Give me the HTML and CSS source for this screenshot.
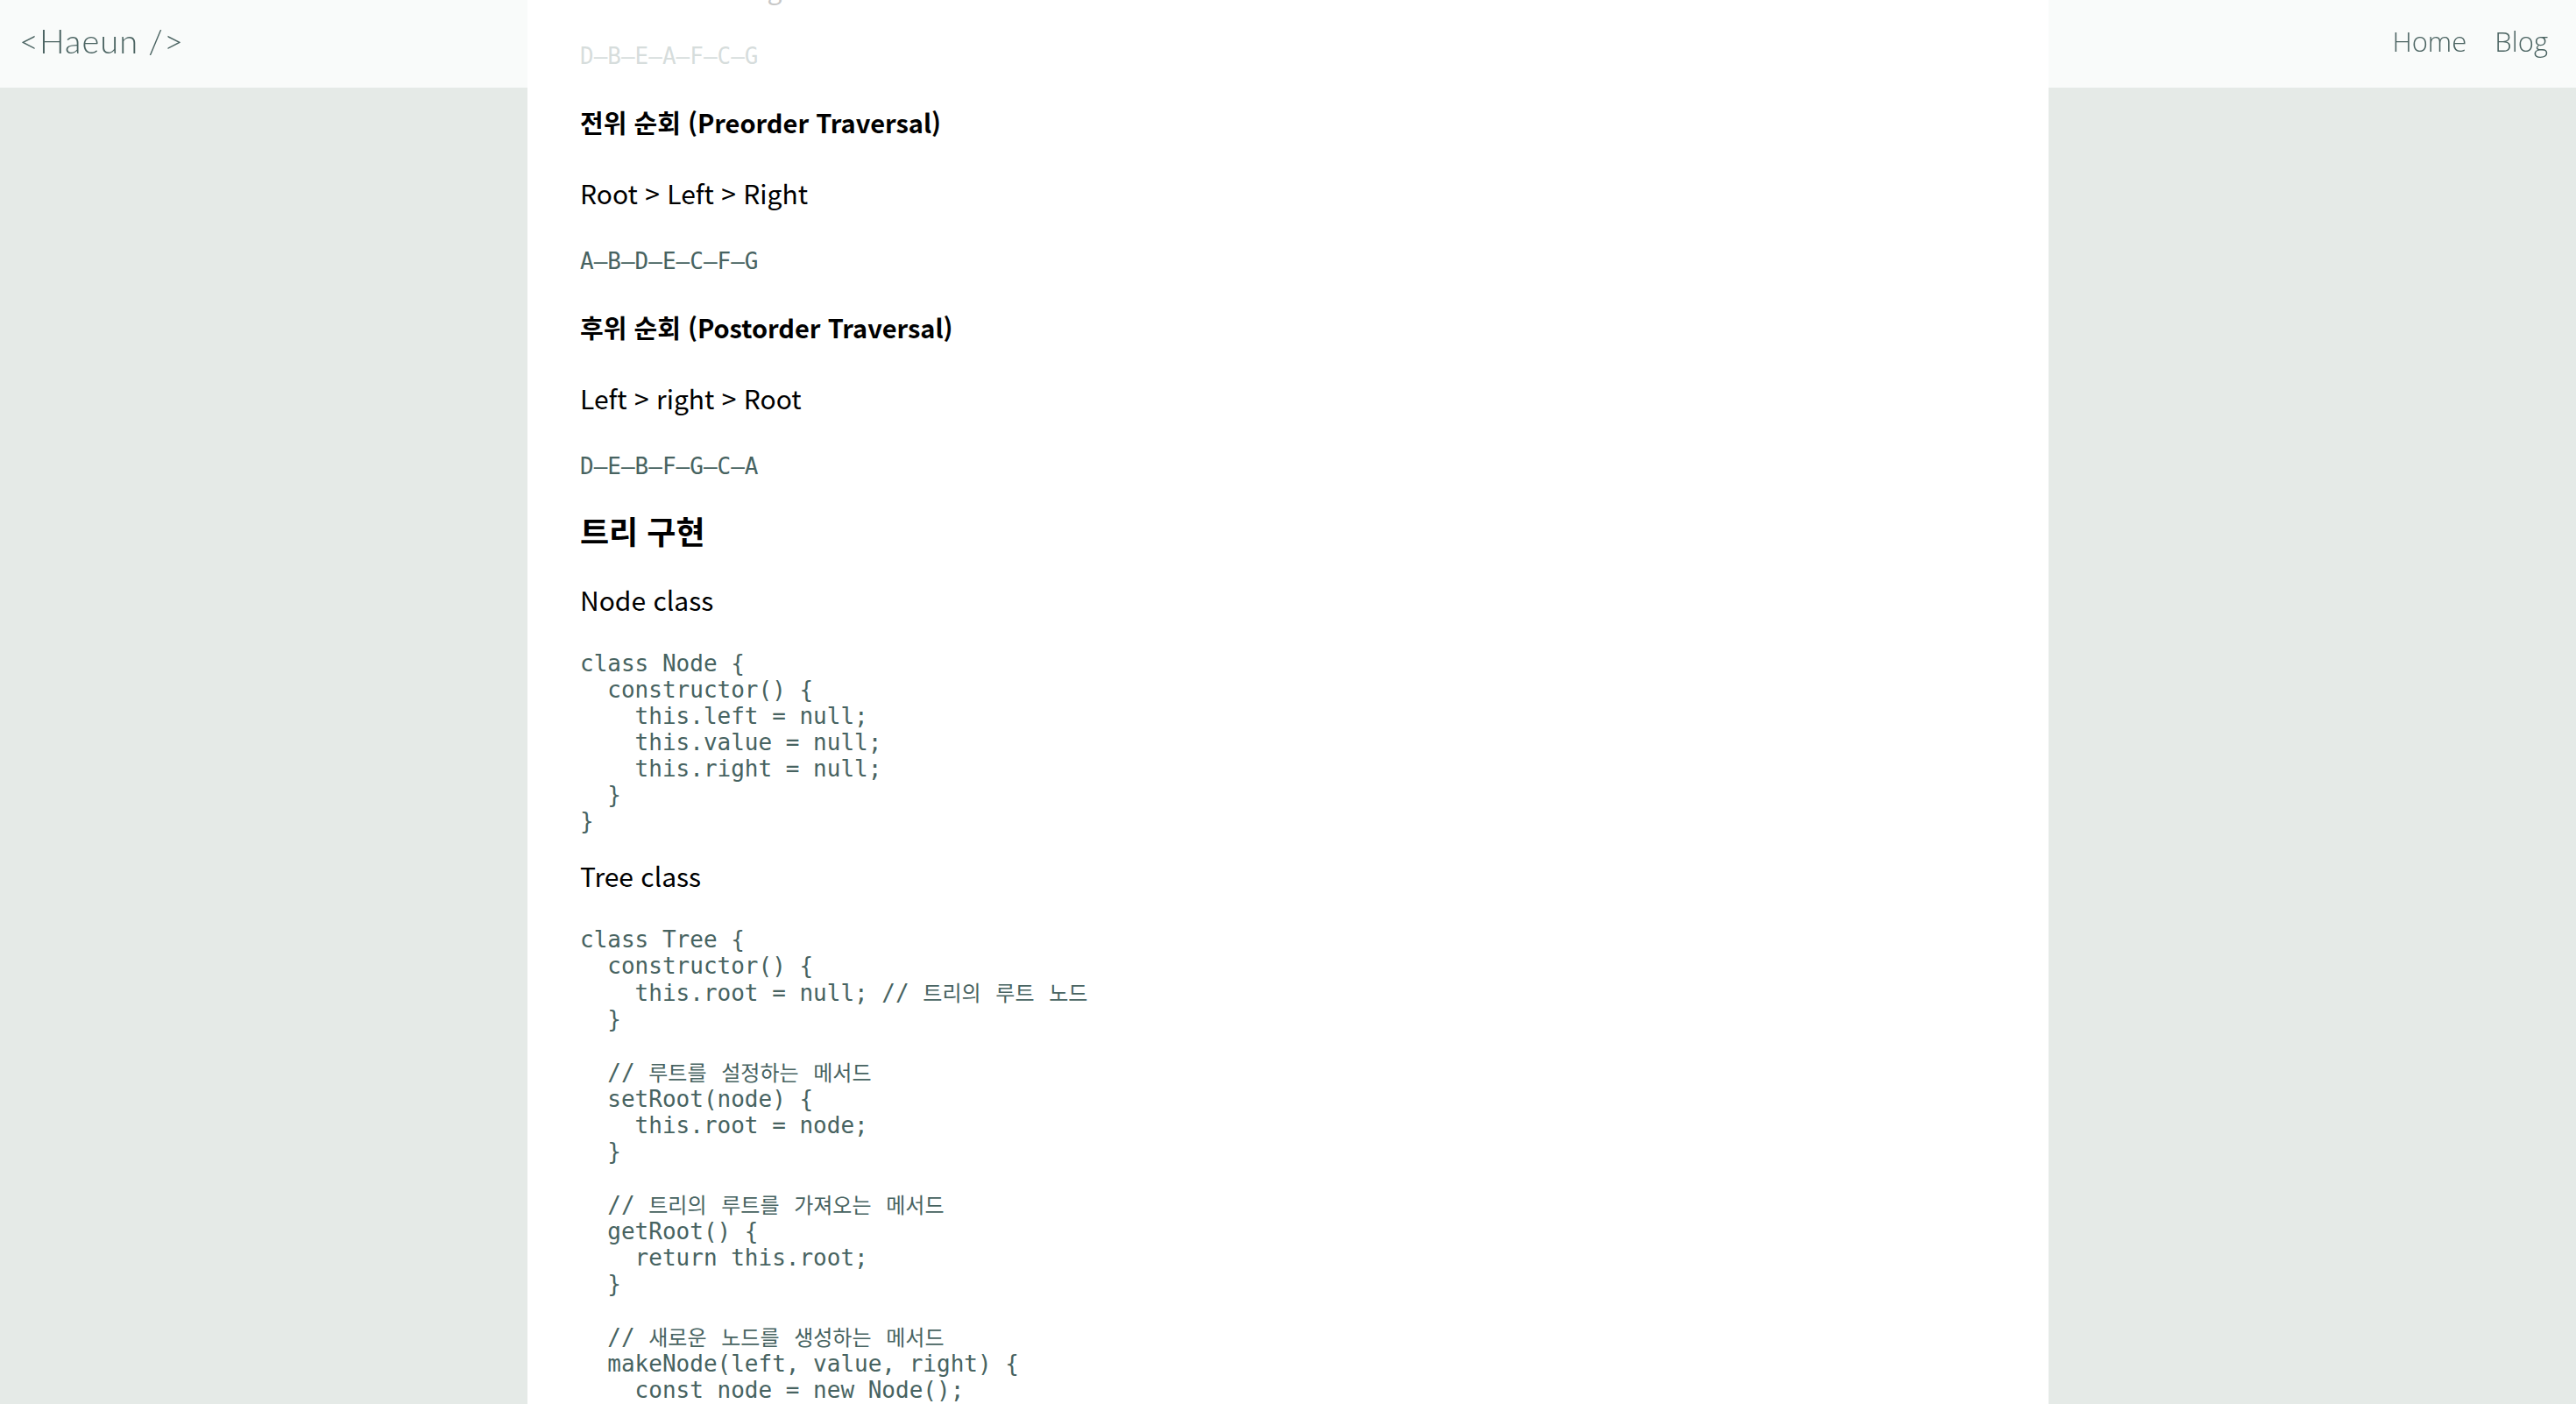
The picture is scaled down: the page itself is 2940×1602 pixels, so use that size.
FILE: index.html
```html
<!DOCTYPE html>
<html lang="ko">
<head>
<meta charset="utf-8">
<title>트리 - Haeun</title>
<link rel="stylesheet" href="styles.css">
</head>
<body>
<header class="site-header">
  <a class="logo" href="#">&lt;Haeun /&gt;</a>
  <nav class="nav">
    <a class="nav-link" href="#">Home</a>
    <a class="nav-link" href="#">Blog</a>
  </nav>
</header>
<main class="page">
  <article class="post">
    <h2 class="h2">트리 순회</h2>
    <h3 class="h3">중위 순회 (Inorder Traversal)</h3>
    <p class="p scroll-mark">Left &gt; Root &gt; Right</p>
    <pre class="code">D–B–E–A–F–C–G</pre>
    <h3 class="h3">전위 순회 (Preorder Traversal)</h3>
    <p class="p">Root &gt; Left &gt; Right</p>
    <pre class="code">A–B–D–E–C–F–G</pre>
    <h3 class="h3">후위 순회 (Postorder Traversal)</h3>
    <p class="p">Left &gt; right &gt; Root</p>
    <pre class="code">D–E–B–F–G–C–A</pre>
    <h2 class="h2">트리 구현</h2>
    <p class="p">Node class</p>
    <pre class="code code-block">class Node {
  constructor() {
    this.left = null;
    this.value = null;
    this.right = null;
  }
}</pre>
    <p class="p">Tree class</p>
    <pre class="code code-block">class Tree {
  constructor() {
    this.root = null; // <span class="ko-code">트리의 루트 노드</span>
  }

  // <span class="ko-code">루트를 설정하는 메서드</span>
  setRoot(node) {
    this.root = node;
  }

  // <span class="ko-code">트리의 루트를 가져오는 메서드</span>
  getRoot() {
    return this.root;
  }

  // <span class="ko-code">새로운 노드를 생성하는 메서드</span>
  makeNode(left, value, right) {
    const node = new Node();
    node.left = left;
    node.value = value;
    node.right = right;
    return node;
  }
}</pre>
  </article>
</main>
<script src="script.js"></script>
</body>
</html>
```
FILE: styles.css
```css
html {
  scrollbar-width: none;
}
html::-webkit-scrollbar {
  display: none;
}
body {
  margin: 0;
  background: #e5eae7;
  font-family: "Noto Sans CJK KR", "Noto Sans", sans-serif;
  color: #000;
}
a {
  text-decoration: none;
}
.site-header {
  position: fixed;
  top: 0;
  left: 0;
  right: 0;
  height: 100px;
  background: rgba(255, 255, 255, 0.78);
  display: flex;
  align-items: center;
  justify-content: space-between;
  padding: 0 32px 6px 22px;
  box-sizing: border-box;
  z-index: 10;
}
.logo {
  font-family: Lato, "Open Sans", sans-serif;
  font-weight: 300;
  font-size: 38px;
  letter-spacing: 1px;
  color: #4b6462;
  margin-bottom: 3px;
}
.nav {
  display: flex;
  gap: 32px;
}
.nav-link {
  font-family: "Open Sans", sans-serif;
  font-weight: 300;
  font-size: 31px;
  color: #4b6462;
}
.page {
  max-width: 1736px;
  margin: 0 auto;
  background: #fff;
  min-height: 100vh;
}
.post {
  display: flex;
  flex-direction: column;
  align-items: flex-start;
  padding: 240px 60px 200px;
}
.h2 {
  margin: 33px 0 0;
  font-size: 36px;
  line-height: 50px;
  font-weight: 700;
}
.h3 {
  margin: 38px 0 0;
  font-size: 29px;
  line-height: 45px;
  font-weight: 700;
}
.p {
  margin: 36px 0 0;
  font-size: 30px;
  line-height: 45px;
}
.h2 + .p {
  margin-top: 32px;
}
.code {
  margin: 40px 0 0;
  font-family: "DejaVu Sans Mono", "Liberation Mono", "Noto Sans CJK KR", monospace;
  font-size: 26px;
  line-height: 30px;
  color: #476361;
}
.code-block {
  margin-top: 35px;
}
.code + .p {
  margin-top: 25px;
}
.ko-code {
  font-family: "Noto Sans CJK KR", sans-serif;
  font-size: 24px;
  word-spacing: 10px;
}
```
FILE: script.js
```js
const mark = document.querySelector('.scroll-mark');
const rect = mark.getBoundingClientRect();
window.scrollTo(0, window.scrollY + rect.top + rect.height / 2 + 13);
```
